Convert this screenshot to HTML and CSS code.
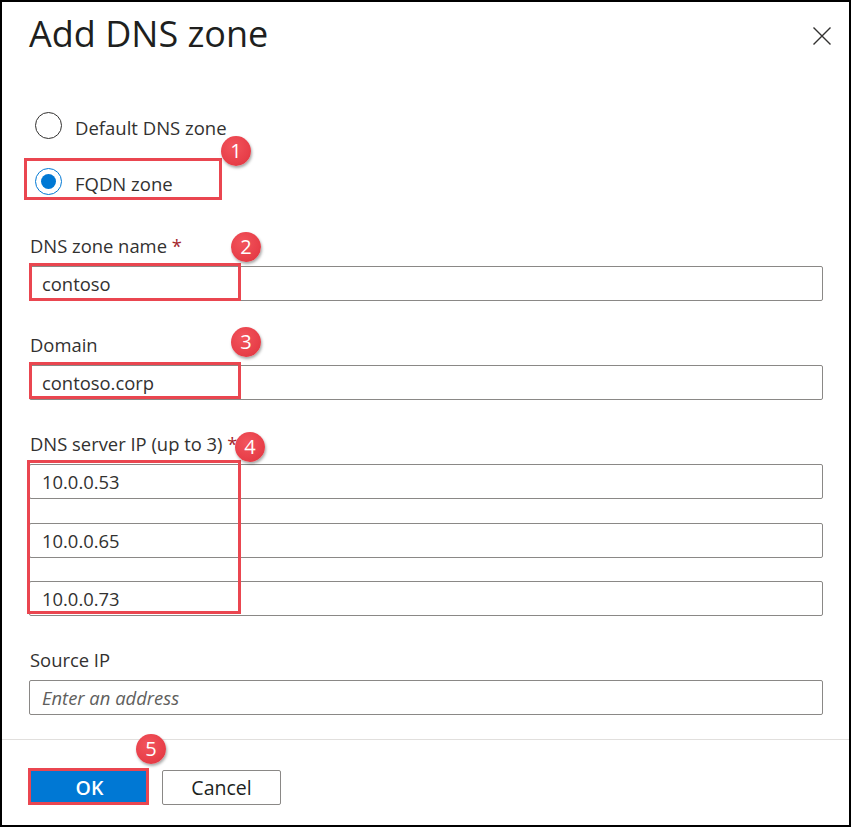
FILE: index.html
```html
<!DOCTYPE html>
<html lang="en">
<head>
<meta charset="utf-8">
<title>Add DNS zone</title>
<link rel="stylesheet" href="styles.css">
</head>
<body>
<div class="frame">
  <header class="header">
    <h1 class="title">Add DNS zone</h1>
    <button class="close" aria-label="Close">
      <svg width="18" height="18" viewBox="0 0 18 18"><path d="M0.5 0.5 L17.5 17.5 M17.5 0.5 L0.5 17.5" stroke="#323130" stroke-width="1.4" fill="none"/></svg>
    </button>
  </header>

  <main class="body">
    <div class="radios">
      <div class="radio-row">
        <span class="radio"></span>
        <span class="radio-label">Default DNS zone</span>
      </div>
      <div class="radio-row">
        <span class="radio checked"></span>
        <span class="radio-label">FQDN zone</span>
      </div>
      <span class="hl hl-1"></span>
      <span class="badge badge-1">1</span>
    </div>

    <div class="field">
      <div class="label">DNS zone name <span class="req">*</span></div>
      <div class="input"><span class="value">contoso</span></div>
      <span class="hl hl-2"></span>
      <span class="badge badge-2">2</span>
    </div>

    <div class="field">
      <div class="label">Domain</div>
      <div class="input"><span class="value">contoso.corp</span></div>
      <span class="hl hl-3"></span>
      <span class="badge badge-3">3</span>
    </div>

    <div class="field">
      <div class="label">DNS server IP (up to 3) <span class="req">*</span></div>
      <div class="input-stack">
        <div class="input"><span class="value">10.0.0.53</span></div>
        <div class="input"><span class="value">10.0.0.65</span></div>
        <div class="input"><span class="value">10.0.0.73</span></div>
      </div>
      <span class="hl hl-4"></span>
      <span class="badge badge-4">4</span>
    </div>

    <div class="field">
      <div class="label">Source IP</div>
      <div class="input"><span class="placeholder">Enter an address</span></div>
    </div>
  </main>

  <footer class="footer">
    <div class="actions">
      <button class="btn btn-primary">OK</button>
      <button class="btn btn-default">Cancel</button>
      <span class="hl hl-5"></span>
      <span class="badge badge-5">5</span>
    </div>
  </footer>
</div>
</body>
</html>
```

FILE: styles.css
```css
* { box-sizing: border-box; }

html, body {
  margin: 0;
  padding: 0;
  background: #fff;
}

body {
  font-family: "Open Sans", "Noto Sans", "Liberation Sans", sans-serif;
  color: #323130;
}

.frame {
  width: 851px;
  height: 827px;
  border: 2px solid #000;
  background: #fff;
  display: flex;
  flex-direction: column;
}

.header {
  display: flex;
  justify-content: space-between;
  align-items: flex-start;
  padding: 8px 18px 0 27px;
}

.title {
  margin: 0;
  font-size: 36px;
  font-weight: 400;
  line-height: 48px;
  color: #201f1e;
}

.close {
  margin-top: 17px;
  padding: 0;
  border: 0;
  background: none;
  width: 18px;
  height: 18px;
  display: block;
}
.close svg { display: block; }

.body {
  flex: 1;
  padding: 0 26px 0 27px;
  display: flex;
  flex-direction: column;
}

.radios {
  position: relative;
  margin-top: 54px;
  margin-left: 6px;
  display: flex;
  flex-direction: column;
  gap: 30px;
}

.radio-row {
  display: flex;
  align-items: flex-start;
  gap: 13px;
  height: 26px;
}

.radio {
  width: 27px;
  height: 27px;
  border: 1.5px solid #323130;
  border-radius: 50%;
  flex: none;
  display: flex;
  align-items: center;
  justify-content: center;
}

.radio.checked {
  border: 1.5px solid #0078d4;
}
.radio.checked::after {
  content: "";
  width: 15px;
  height: 15px;
  border-radius: 50%;
  background: #0078d4;
}

.radio-label {
  font-size: 18.5px;
  line-height: 26px;
  padding-top: 3px;
  white-space: nowrap;
}

.field {
  position: relative;
  margin-top: 32px;
}
.radios + .field { margin-top: 40px; }

.label {
  font-size: 18.4px;
  line-height: 24px;
  margin-bottom: 8px;
  padding-left: 1px;
}

.req { color: #a4262c; }

.input {
  height: 35px;
  border: 1px solid #8a8886;
  border-radius: 2px;
  padding: 0 12px;
  font-size: 18.4px;
  line-height: 33px;
  white-space: nowrap;
  overflow: hidden;
}

.input-stack {
  display: flex;
  flex-direction: column;
  gap: 23.5px;
}

.placeholder {
  color: #605e5c;
  font-style: italic;
}

.footer {
  border-top: 1px solid #e1dfdd;
  height: 86px;
  margin-top: 23px;
  padding: 30px 0 0 28px;
}

.actions {
  position: relative;
  display: flex;
  gap: 13px;
}

.btn {
  height: 35px;
  width: 119px;
  border-radius: 2px;
  font-family: inherit;
  font-size: 19.5px;
  padding: 0;
  line-height: 33px;
}

.btn-primary {
  background: #0078d4;
  border: 1px solid #0078d4;
  color: #fff;
  font-weight: 600;
}

.btn-default {
  background: #fff;
  border: 1px solid #8a8886;
  color: #201f1e;
  font-weight: 400;
}

/* annotation overlays */
.hl {
  position: absolute;
  border: 3px solid #ea4650;
  pointer-events: none;
}

.hl-1 { left: -11px; top: 46px; width: 198px; height: 42px; }
.hl-2 { left: 0; top: 29px; width: 212px; height: 38px; }
.hl-3 { left: 0; top: 29px; width: 212px; height: 37px; }
.hl-4 { left: -2px; top: 28px; width: 214px; height: 154px; }
.hl-5 { left: -2px; top: -2px; width: 121px; height: 37px; }

.badge {
  position: absolute;
  width: 30px;
  height: 30px;
  border-radius: 50%;
  background: radial-gradient(circle at 40% 35%, #f2545c 0%, #e8404a 60%, #dc333e 100%);
  box-shadow: 1px 2px 3px rgba(0, 0, 0, 0.35);
  color: #fff;
  font-size: 20px;
  line-height: 30px;
  text-align: center;
}

.badge-1 { left: 186px; top: 24px; }
.badge-2 { left: 202px; top: -2px; }
.badge-3 { left: 202px; top: -6px; }
.badge-4 { left: 206px; top: 0; }
.badge-5 { left: 106px; top: -36px; }
```
